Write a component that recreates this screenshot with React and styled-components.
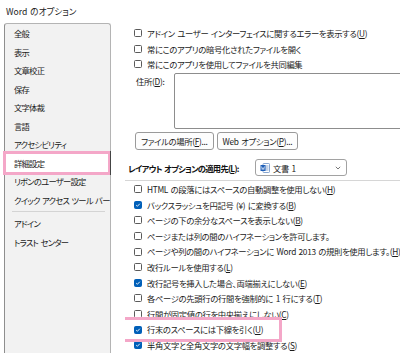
import styled, { createGlobalStyle } from 'styled-components'

const GlobalStyle = createGlobalStyle`
    html, body {
        margin: 0;
        padding: 0;
        background: #ffffff;
    }
    body {
        font-family: "Noto Sans CJK JP", "Noto Sans", sans-serif;
        font-feature-settings: "palt";
        color: #1b1b1b;
    }
`

const PINK = '#f4a7c8'

const menu = [
    '全般', '表示', '文章校正', '保存', '文字体裁', '言語', 'アクセシビリティ',
    '詳細設定', 'リボンのユーザー設定', 'クイック アクセス ツール バー', '-', 'アドイン', 'トラスト センター'
]

const topOptions = [
    { label: 'アドイン ユーザー インターフェイスに関するエラーを表示する', key: 'U' },
    { label: '常にこのアプリの暗号化されたファイルを開く' },
    { label: '常にこのアプリを使用してファイルを共同編集' },
]

const layoutOptions = [
    { label: 'HTML の段落にはスペースの自動調整を使用しない', key: 'H' },
    { label: 'バックスラッシュを円記号 (¥) に変換する', key: 'B', checked: true },
    { label: 'ページの下の余分なスペースを表示しない', key: 'B' },
    { label: 'ページまたは列の間のハイフネーションを許可します。' },
    { label: 'ページや列の間のハイフネーションに Word 2013 の規則を使用します。', key: 'H' },
    { label: '改行ルールを使用する', key: 'L' },
    { label: '改行記号を挿入した場合、両端揃えにしない', key: 'E', checked: true },
    { label: '各ページの先頭行の行間を強制的に 1 行にする', key: 'T' },
    { label: '行間が固定値の行を中央揃えにしない', key: 'C' },
    { label: '行末のスペースには下線を引く', key: 'U', checked: true, highlight: true },
    { label: '半角文字と全角文字の文字幅を調整する', key: 'S', checked: true },
]

function Key({ k }) {
    if (!k) return null
    return <>(<u>{k}</u>)</>
}

function Check({ checked }) {
    return (
        <CheckBox checked={checked}>
            {checked && (
                <svg width="8" height="8" viewBox="0 0 8 8">
                    <path d="M1.6 4.2 L3.2 5.7 L6.4 2.3" fill="none" stroke="#fff" strokeWidth="1.2" />
                </svg>
            )}
        </CheckBox>
    )
}

function DocIcon() {
    return (
        <svg width="10" height="10" viewBox="0 0 10 10">
            <rect x="3" y="0.5" width="6.5" height="9" rx="0.8" fill="#fff" stroke="#6a8fc4" strokeWidth="0.8" />
            <path d="M5 3h3.5M5 5h3.5M5 7h3.5" stroke="#6a8fc4" strokeWidth="0.8" />
            <rect x="0.5" y="2" width="5" height="6" rx="0.6" fill="#1f5fb8" />
            <path d="M1.4 3.4 L2.2 6.6 L3 4.6 L3.8 6.6 L4.6 3.4" fill="none" stroke="#fff" strokeWidth="0.6" />
        </svg>
    )
}

export default function App() {
    return (
        <>
            <GlobalStyle />
            <Page>
                <Title>Word のオプション</Title>
                <Body>
                    <Sidebar>
                        {menu.map((m, i) =>
                            m === '-'
                                ? <MenuSeparator key={i} />
                                : <MenuItem key={i} selected={m === '詳細設定'}>{m}</MenuItem>
                        )}
                    </Sidebar>
                    <Content>
                        {topOptions.map((o, i) => (
                            <TopRow key={i}>
                                <Check checked={o.checked} />
                                <span>{o.label}<Key k={o.key} /></span>
                            </TopRow>
                        ))}
                        <AddressBlock>
                            <AddressLabel>住所(<u>D</u>):</AddressLabel>
                            <AddressField />
                        </AddressBlock>
                        <ButtonRow>
                            <Button>ファイルの場所(<u>F</u>)...</Button>
                            <Button>Web オプション(<u>P</u>)...</Button>
                        </ButtonRow>
                        <LayoutHeader>
                            <HeaderLabel>レイアウト オプションの適用先(<u>L</u>):</HeaderLabel>
                            <Select>
                                <DocIcon />
                                <SelectText>文書 1</SelectText>
                                <Chevron>
                                    <svg width="6" height="4" viewBox="0 0 6 4">
                                        <path d="M0.8 0.8 L3 3 L5.2 0.8" fill="none" stroke="#555" strokeWidth="0.8" />
                                    </svg>
                                </Chevron>
                            </Select>
                        </LayoutHeader>
                        <Divider />
                        <OptionList>
                            {layoutOptions.map((o, i) => (
                                <OptionRow key={i} highlight={o.highlight}>
                                    <Check checked={o.checked} />
                                    <span>{o.label}<Key k={o.key} /></span>
                                </OptionRow>
                            ))}
                        </OptionList>
                    </Content>
                </Body>
            </Page>
        </>
    )
}

const Page = styled.div`
    width: 400px;
    height: 353px;
    overflow: hidden;
    font-size: 8.3px;
    letter-spacing: -0.3px;
    word-spacing: 1px;
    line-height: 1;
`

const Title = styled.div`
    height: 23px;
    padding: 7px 0 0 6px;
    box-sizing: border-box;
    font-size: 8.6px;
    letter-spacing: 0;
    color: #222;
`

const Body = styled.div`
    display: flex;
    height: 330px;
`

const Sidebar = styled.div`
    width: 107px;
    margin-left: 4px;
    box-sizing: border-box;
    background: #f2f2f2;
    border: 1px solid #b4b4b4;
    border-left-color: #8e8e8e;
    border-bottom: none;
    border-radius: 3px 3px 0 0;
    display: flex;
    flex-direction: column;
    flex-shrink: 0;
    letter-spacing: -0.75px;
    word-spacing: 1.2px;
`

const MenuItem = styled.div`
    height: 18.5px;
    display: flex;
    align-items: center;
    padding-left: 9px;
    color: #1a1a1a;
    white-space: nowrap;
    ${(p) => p.selected && `
        position: relative;
        z-index: 1;
        height: 24px;
        box-sizing: border-box;
        margin: -2.75px 0 -2.75px -2px;
        padding-left: 8px;
        background: #ffffff;
        border: 3px solid ${PINK};
        border-right-width: 2px;
        box-shadow: 1px 0 0 #444;
    `}
`

const MenuSeparator = styled.div`
    height: 1px;
    margin: 2px 5px 2px 7px;
    background: #d4d4d4;
`

const Content = styled.div`
    flex: 1;
    min-width: 0;
    margin-left: 14px;
    padding-top: 2px;
    display: flex;
    flex-direction: column;
    overflow: hidden;
`

const CheckBox = styled.span`
    width: 8px;
    height: 8px;
    box-sizing: border-box;
    flex-shrink: 0;
    display: inline-flex;
    align-items: center;
    justify-content: center;
    border-radius: 1.5px;
    border: 1px solid ${(p) => (p.checked ? '#005fb8' : '#5a5a5a')};
    background: ${(p) => (p.checked ? '#005fb8' : '#ffffff')};
    margin-right: 5px;
    svg { display: block; }
`

const TopRow = styled.div`
    height: 16px;
    display: flex;
    align-items: center;
    padding-left: 9px;
    white-space: nowrap;
`

const AddressBlock = styled.div`
    display: flex;
    margin-top: 1px;
    height: 57px;
`

const AddressLabel = styled.div`
    width: 38px;
    padding: 4px 0 0 11px;
    flex-shrink: 0;
`

const AddressField = styled.div`
    flex: 1;
    margin-right: -10px;
    border: 1px solid #8d8d8d;
    border-radius: 2px;
    background: #ffffff;
`

const ButtonRow = styled.div`
    display: flex;
    gap: 3px;
    margin-top: 3px;
    padding-left: 10px;
`

const Button = styled.div`
    height: 18px;
    box-sizing: border-box;
    padding: 0 5px;
    display: flex;
    align-items: center;
    border: 1px solid #9a9a9a;
    border-radius: 3px;
    background: #fdfdfd;
    white-space: nowrap;
    color: #1a1a1a;
`

const LayoutHeader = styled.div`
    display: flex;
    align-items: center;
    margin-top: 9px;
    padding-left: 3px;
`

const HeaderLabel = styled.div`
    width: 127px;
    flex-shrink: 0;
    font-weight: bold;
    white-space: nowrap;
    letter-spacing: -0.75px;
    color: #111;
`

const Select = styled.div`
    width: 92px;
    height: 17px;
    box-sizing: border-box;
    display: flex;
    align-items: center;
    padding: 0 4px;
    border: 1px solid #a2a2a2;
    border-radius: 3px;
    background: #ffffff;
`

const SelectText = styled.span`
    margin-left: 3px;
    flex: 1;
`

const Chevron = styled.span`
    display: flex;
    margin-right: 1px;
`

const Divider = styled.div`
    height: 1px;
    margin-top: 4px;
    background: #d6d6d6;
    margin-right: -20px;
`

const OptionList = styled.div`
    display: flex;
    flex-direction: column;
`

const OptionRow = styled.div`
    height: 15.6px;
    display: flex;
    align-items: center;
    padding-left: 9px;
    white-space: nowrap;
    ${(p) => p.highlight && `
        position: relative;
        z-index: 1;
        align-self: flex-start;
        height: 25px;
        box-sizing: border-box;
        margin: -4.7px 0 -4.7px -3px;
        padding: 0 16px 0 9px;
        background: #ffffff;
        border: 3px solid ${PINK};
    `}
`
